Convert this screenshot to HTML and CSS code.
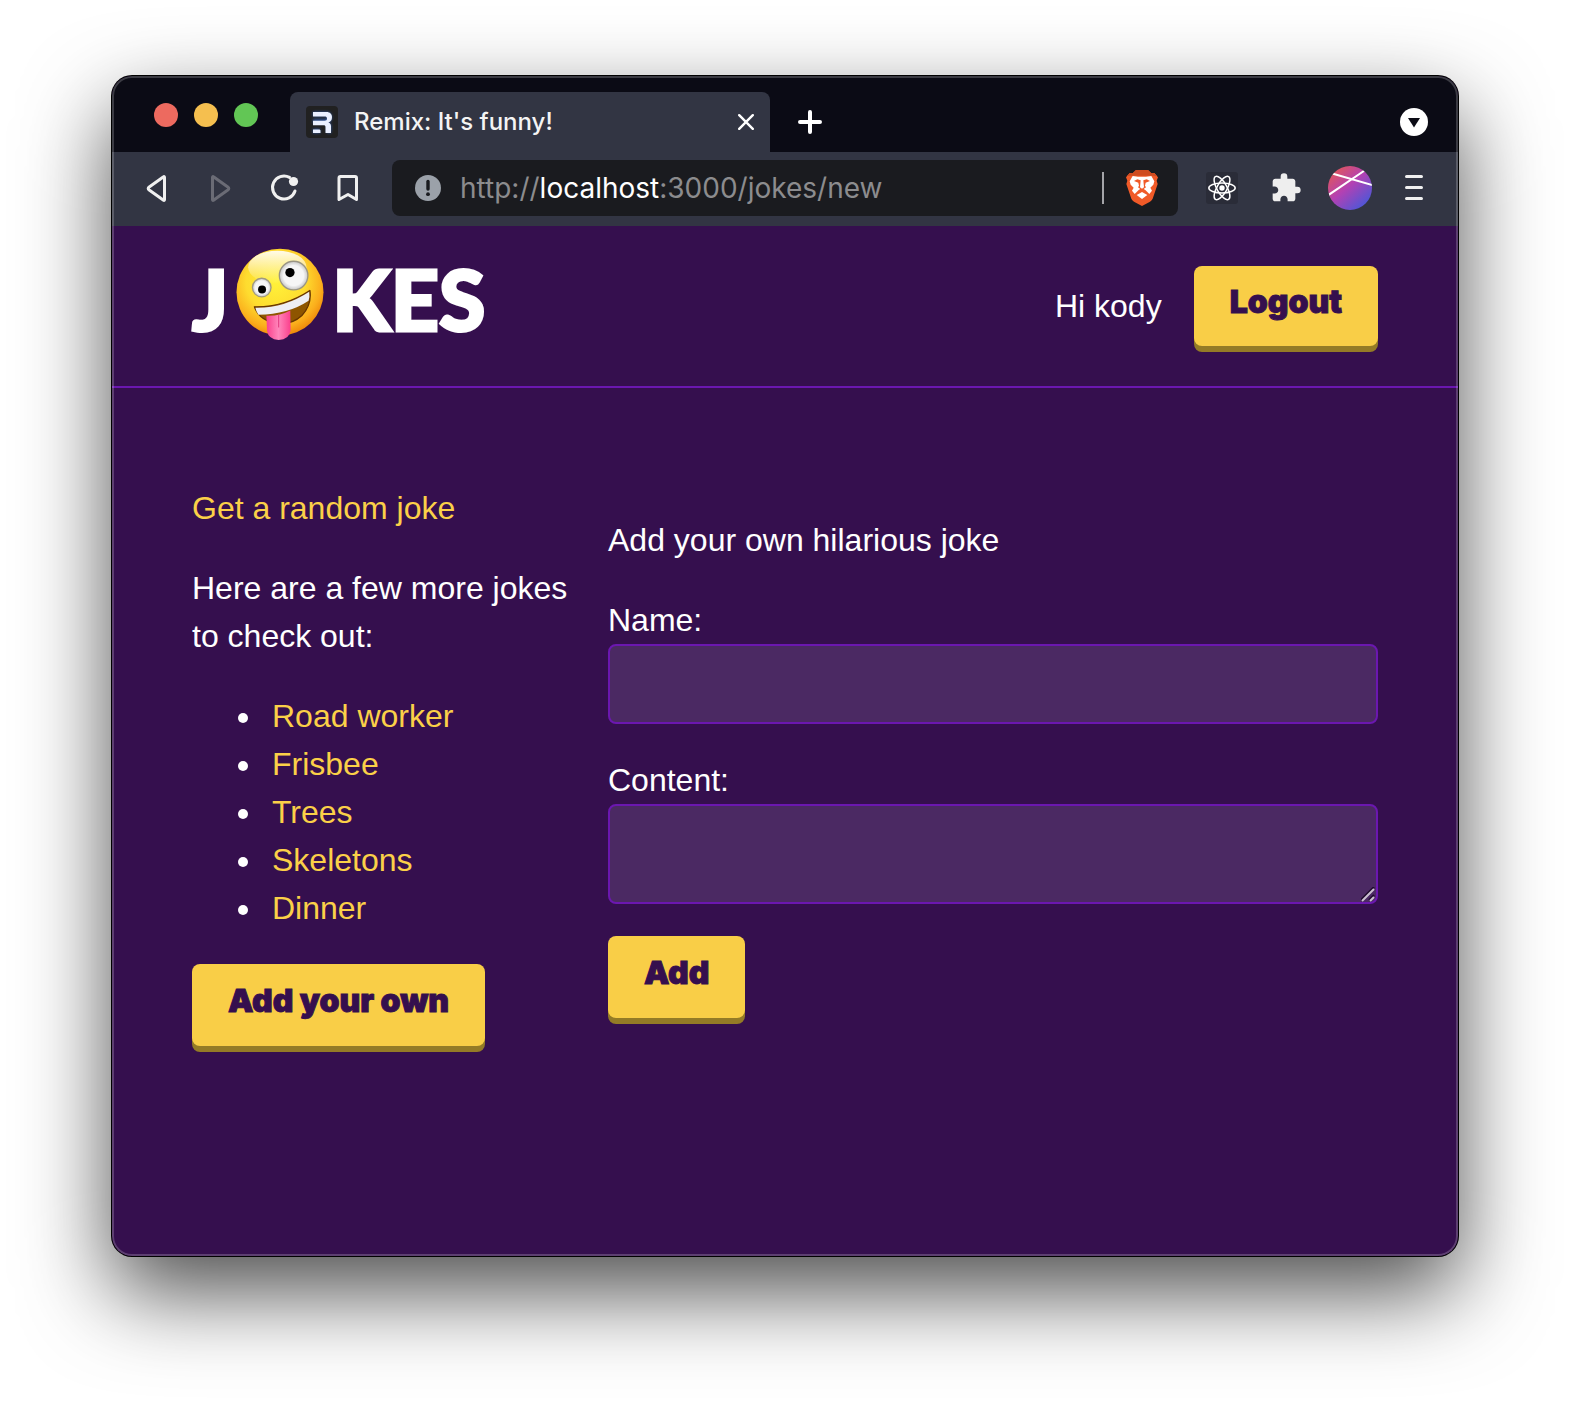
FILE: index.html
```
<!DOCTYPE html>
<html lang="en">
<head>
<meta charset="utf-8">
<meta name="viewport" content="width=device-width, initial-scale=1">
<title>Remix: It's funny!</title>
<link rel="stylesheet" href="styles.css">
</head>
<body>
<div class="window">
  <div class="tabstrip">
    <div class="lights"><span class="light red"></span><span class="light amber"></span><span class="light green"></span></div>
    <div class="tab">
      <svg class="favicon" viewBox="0 0 32 32" width="32" height="32" aria-hidden="true">
        <defs><filter id="glow" x="-50%" y="-50%" width="200%" height="200%"><feGaussianBlur stdDeviation="1.5"/></filter></defs>
        <rect width="32" height="32" rx="4" fill="#212121"/>
        <path d="M7 8H20Q23.500 8 23.500 11.500T20 15.200H7M7 25H14M23 18V27" fill="none" stroke="#3f83ff" stroke-width="4" filter="url(#glow)" opacity=".6"/>
        <path d="M7 6H20.500C24 6 26 8.200 26 11.200C26 14 24.600 15.800 22.300 16.400C24.300 17 25 18.300 25 20.500V27H19.500V21.500C19.500 19.700 19 19.300 17.500 19.300H7V14.700H18.500C20.300 14.700 21 14 21 12.500S20.300 10.400 18.500 10.400H7ZM7 23.500H13C14 23.500 14.500 24 14.500 25V27H7Z" fill="#eaf0ff"/>
      </svg>
      <span class="tab-title">Remix: It's funny!</span>
      <button class="plain tab-close" aria-label="Close tab"><svg viewBox="0 0 16 16" width="16" height="16"><path d="M1.200 1.200L14.800 14.800M14.800 1.200L1.200 14.800" stroke="#fff" stroke-width="2.400" stroke-linecap="round"/></svg></button>
    </div>
    <button class="plain new-tab" aria-label="New tab"><svg viewBox="0 0 24 24" width="24" height="24"><path d="M12 2V22M2 12H22" stroke="#fff" stroke-width="4" stroke-linecap="round"/></svg></button>
    <button class="plain tab-search" aria-label="Search tabs"><svg viewBox="0 0 28 28" width="28" height="28"><circle cx="14" cy="14" r="14" fill="#fff"/><path d="M8 10H20L14 19.500Z" fill="#0b0b15"/></svg></button>
  </div>

  <div class="toolbar">
    <div class="nav">
      <button class="plain" aria-label="Back"><svg viewBox="0 0 32 32" width="32" height="32"><path d="M24.500 5.500V27.500Q24.500 29 23.200 28L9.200 18Q7.200 16.500 9.200 15L23.200 5Q24.500 4 24.500 5.500Z" fill="none" stroke="#f0f0f0" stroke-width="3" stroke-linejoin="round"/></svg></button>
      <button class="plain" aria-label="Forward" disabled><svg viewBox="0 0 32 32" width="32" height="32"><path d="M8.500 5.500V27.500Q8.500 29 9.800 28L23.800 18Q25.800 16.500 23.800 15L9.800 5Q8.500 4 8.500 5.500Z" fill="none" stroke="#6a6b75" stroke-width="3" stroke-linejoin="round"/></svg></button>
      <button class="plain" aria-label="Reload"><svg viewBox="0 0 32 32" width="32" height="32"><path d="M21.500 5.400A11.500 11.500 0 1 0 27 19" fill="none" stroke="#f0f0f0" stroke-width="3" stroke-linecap="round"/><circle cx="25.500" cy="9.500" r="4.600" fill="#f0f0f0"/></svg></button>
      <button class="plain" aria-label="Bookmark"><svg viewBox="0 0 32 32" width="32" height="32"><path d="M8.500 4.500H23Q24.500 4.500 24.500 6V27.500L16 22.500L7 27.500V6Q7 4.500 8.500 4.500Z" fill="none" stroke="#f0f0f0" stroke-width="3" stroke-linejoin="round"/></svg></button>
    </div>
    <div class="address">
      <svg viewBox="0 0 26 26" width="26" height="26" aria-hidden="true"><circle cx="13" cy="13" r="13" fill="#9ba1a9"/><path d="M13 6.500V14" stroke="#1a1b1f" stroke-width="3.400" stroke-linecap="round"/><circle cx="13" cy="19.200" r="1.900" fill="#1a1b1f"/></svg>
      <span class="url">http://<b>localhost</b>:3000/jokes/new</span>
      <span class="divider"></span>
      <svg class="brave" viewBox="0 0 96 108" width="32" height="36" aria-hidden="true">
        <path d="M30 0H66L76 10L85 9L96 22L92 32L95 42L80 86Q78 91 72 95L48 108L24 95Q18 91 16 86L1 42L4 32L0 22L11 9L20 10Z" fill="#f05a28"/>
        <path d="M30 0H66L76 10L85 9L93 18L78 17H18L3 18L11 9L20 10Z" fill="#cf4c20"/>
        <path d="M20 18L36 20H60L76 18L85 34L82 44L73 53L78 62L70 72L58 60L53 57L60 52L57 47L59 38L72 33L62 28L52 31L54 52L48 56L42 52L44 31L34 28L24 33L37 38L39 47L36 52L43 57L38 60L26 72L18 62L23 53L14 44L11 34Z" fill="#fff"/>
        <path d="M48 66L64 75L48 87L32 75Z" fill="#fff"/>
      </svg>
    </div>
    <div class="extensions">
      <button class="plain" aria-label="React Developer Tools"><svg viewBox="0 0 32 32" width="32" height="32"><rect width="32" height="32" rx="3" fill="#2a2c38"/><g fill="none" stroke="#fff" stroke-width="1.500"><ellipse cx="16" cy="16" rx="13.200" ry="5"/><ellipse cx="16" cy="16" rx="13.200" ry="5" transform="rotate(60 16 16)"/><ellipse cx="16" cy="16" rx="13.200" ry="5" transform="rotate(120 16 16)"/></g><circle cx="16" cy="16" r="2.700" fill="#fff"/></svg></button>
      <button class="plain" aria-label="Extensions"><svg viewBox="0 0 24 24" width="32" height="32"><path d="M20.500 11H19V7c0-1.100-.9-2-2-2h-4V3.500a2.500 2.500 0 0 0-5 0V5H4c-1.100 0-1.990.9-1.990 2v3.800H3.500c1.490 0 2.700 1.210 2.700 2.700s-1.210 2.700-2.700 2.700H2V20c0 1.100.9 2 2 2h3.800v-1.500c0-1.490 1.210-2.700 2.700-2.700s2.700 1.210 2.700 2.700V22H17c1.100 0 2-.9 2-2v-4h1.500a2.500 2.500 0 0 0 0-5z" fill="#eee"/></svg></button>
      <button class="plain" aria-label="Profile"><svg viewBox="0 0 132 132" width="44" height="44"><defs><linearGradient id="av" x1=".15" y1=".1" x2=".85" y2=".9"><stop offset="0" stop-color="#de5560"/><stop offset=".45" stop-color="#b341b3"/><stop offset="1" stop-color="#4c57d8"/></linearGradient><clipPath id="avc"><circle cx="66" cy="66" r="66"/></clipPath></defs><g clip-path="url(#avc)"><rect width="132" height="132" fill="url(#av)"/><path d="M0 88L112 12M10 22L136 58" stroke="#fff" stroke-width="6"/></g></svg></button>
      <button class="plain" aria-label="Menu"><svg viewBox="0 0 32 32" width="32" height="32"><path d="M8.500 4.500H23.500M8.500 15.500H23.500M8.500 26.500H23.500" stroke="#f0f0f0" stroke-width="3" stroke-linecap="round"/></svg></button>
    </div>
  </div>

  <div class="page">
    <header class="header">
      <h1 class="logo"><a href="#" title="Remix Jokes" class="logo-link">
        <span>J</span>
        <svg class="zany" viewBox="168 34 264 280" width="88" height="93" role="img" aria-label="O">
          <defs>
            <radialGradient id="face" cx=".45" cy=".38" r=".62"><stop offset="0" stop-color="#fff23a"/><stop offset=".55" stop-color="#fedc2f"/><stop offset=".85" stop-color="#fbae1c"/><stop offset="1" stop-color="#f08c0c"/></radialGradient>
            <linearGradient id="shine" x1="0" y1="0" x2="0" y2="1"><stop offset="0" stop-color="#fff" stop-opacity=".9"/><stop offset="1" stop-color="#fff" stop-opacity="0"/></linearGradient>
            <radialGradient id="eye" cx=".5" cy=".5" r=".5"><stop offset=".7" stop-color="#f6f6f6"/><stop offset="1" stop-color="#c6c6c6"/></radialGradient>
            <linearGradient id="tongue" x1="0" y1="0" x2="1" y2="0"><stop offset="0" stop-color="#fb3f8c"/><stop offset=".5" stop-color="#ff86bb"/><stop offset="1" stop-color="#fb3f8c"/></linearGradient>
          </defs>
          <circle cx="300" cy="167" r="131" fill="url(#face)"/>
          <ellipse cx="292" cy="92" rx="88" ry="50" fill="url(#shine)"/>
          <circle cx="341" cy="117" r="43" fill="url(#eye)" stroke="#9a9584" stroke-width="4"/>
          <circle cx="330" cy="108" r="14" fill="#000"/>
          <circle cx="245" cy="153" r="28" fill="url(#eye)" stroke="#a09a80" stroke-width="4"/>
          <circle cx="246" cy="159" r="12" fill="#000"/>
          <path d="M223 211Q312 213 390 162Q396 205 366 237Q338 263 300 261Q240 258 223 211Z" fill="#8e5500" stroke="#663400" stroke-width="4" stroke-linejoin="round"/>
          <path d="M226 214Q312 216 388 166Q390 183 386 193Q325 234 235 235Q228 226 226 214Z" fill="#eeeef4"/>
          <path d="M259 238Q297 240 331 222L332 282Q328 311 296 311Q265 309 261 284Z" fill="url(#tongue)"/>
          <path d="M296 236V272" stroke="#e23a80" stroke-width="3" stroke-linecap="round"/>
        </svg>
        <span>KES</span>
      </a></h1>
      <div class="user"><span>Hi kody</span><form><button type="button" class="button button-compact">Logout</button></form></div>
    </header>
    <main class="main">
      <div class="list">
        <p><a href="#">Get a random joke</a></p>
        <p>Here are a few more jokes to check out:</p>
        <ul>
          <li><a href="#">Road worker</a></li>
          <li><a href="#">Frisbee</a></li>
          <li><a href="#">Trees</a></li>
          <li><a href="#">Skeletons</a></li>
          <li><a href="#">Dinner</a></li>
        </ul>
        <a href="#" class="button">Add your own</a>
      </div>
      <div class="outlet">
        <p>Add your own hilarious joke</p>
        <form class="joke-form">
          <div class="field"><label for="name">Name:</label><input id="name" type="text" name="name"></div>
          <div class="field"><label for="content">Content:</label><textarea id="content" name="content"></textarea></div>
          <button type="button" class="button">Add</button>
        </form>
      </div>
    </main>
  </div>
</div>
</body>
</html>
```
FILE: styles.css
```
* { box-sizing: border-box; }

body {
  margin: 0;
  min-height: 100vh;
  display: flex;
  padding: 76px 112px 148px;
  background: #fff;
  color: #fff;
  font: 32px/48px "Liberation Sans", Arial, sans-serif;
}

p, h1, ul { margin: 0; }
a { color: #fbd048; text-decoration: none; }
svg { display: block; flex: none; }

.plain {
  display: flex;
  align-items: center;
  justify-content: center;
  padding: 0;
  border: 0;
  background: none;
}

/* Browser window */
.window {
  position: relative;
  flex: 1;
  min-width: 0;
  display: flex;
  flex-direction: column;
  border-radius: 20px;
  overflow: hidden;
  background: #350f4e;
  box-shadow: 0 0 0 1px #000, 0 36px 88px rgba(0, 0, 0, .7);
}

.window::after {
  content: "";
  position: absolute;
  inset: 0;
  border-radius: 20px;
  box-shadow: inset 0 0 0 2px rgba(255, 255, 255, .2);
  pointer-events: none;
}

.tabstrip {
  display: flex;
  align-items: center;
  height: 76px;
  padding: 0 30px 0 42px;
  background: #0b0b15;
}

.lights { display: flex; gap: 16px; padding-top: 2px; }
.light { width: 24px; height: 24px; border-radius: 50%; }
.red { background: #ed6a5f; }
.amber { background: #f5bf4f; }
.green { background: #62c655; }

.tab {
  display: flex;
  align-items: center;
  align-self: flex-end;
  width: 480px;
  height: 60px;
  margin-left: 32px;
  padding: 0 16px;
  border-radius: 8px 8px 0 0;
  background: #323543;
}

.tab-title {
  flex: 1;
  margin-left: 16px;
  font: 500 24px/32px Inter, sans-serif;
  color: #f4f4f4;
}

.new-tab, .tab-search { align-self: flex-end; height: 60px; }
.new-tab { margin-left: 28px; }
.tab-search { margin-left: auto; }

.toolbar {
  display: flex;
  align-items: center;
  gap: 22px;
  padding: 8px 22px 10px 28px;
  background: #323543;
}

.nav { display: flex; gap: 32px; margin-right: 6px; }

.address {
  flex: 1;
  display: flex;
  align-items: center;
  height: 56px;
  padding: 0 20px 0 23px;
  border-radius: 8px;
  background: #1a1b1f;
}

.url {
  flex: 1;
  margin-left: 19px;
  font: 400 28px/40px Inter, sans-serif;
  color: #8c8c8e;
}

.url b { font-weight: 400; color: #fff; }
.divider { width: 2px; height: 32px; margin-right: 22px; background: #a4a4a8; }
.extensions { display: flex; align-items: center; gap: 20px; }
.extensions .plain { width: 44px; height: 44px; }

/* Jokes page */
.header {
  display: flex;
  align-items: center;
  justify-content: space-between;
  height: 162px;
  padding: 0 80px;
  border-bottom: 2px solid #6b17b0;
}

.logo {
  padding-bottom: 14px;
  font: 900 84px/96px Lato, sans-serif;
  -webkit-text-stroke: 3px #fff;
  stroke-linejoin: round;
}

.logo-link { display: flex; align-items: center; gap: 8px; color: #fff; }
.zany { margin-bottom: 10px; }
.user { display: flex; align-items: center; gap: 32px; }

.button {
  display: inline-block;
  padding: 16px 36px 24px;
  border: 0;
  border-radius: 8px;
  background: #f9ce47;
  box-shadow: 0 6px 0 #947b26;
  color: #350f4e;
  font: 900 32px/42px Inter, sans-serif;
  -webkit-text-stroke: 1px #350f4e;
  stroke-linejoin: round;
}

.button-compact { line-height: 40px; }

.main {
  display: flex;
  gap: 32px;
  padding: 96px 80px;
}

.list {
  flex: none;
  width: 384px;
  display: flex;
  flex-direction: column;
  align-items: flex-start;
  gap: 32px;
}

.list ul { padding-left: 72px; }
.list li { padding-left: 8px; }

.outlet { flex: 1; padding-top: 32px; }
.joke-form { display: flex; flex-direction: column; align-items: flex-start; gap: 32px; margin-top: 32px; }
.field { width: 100%; }
.field label { display: block; }

.field input, .field textarea {
  display: block;
  width: 100%;
  height: 80px;
  padding: 16px;
  border: 2px solid #6b17b0;
  border-radius: 8px;
  background: #4b2963;
  color: #fff;
  font: inherit;
}

.field textarea { height: 100px; resize: vertical; }

.field textarea::-webkit-resizer {
  background: url("data:image/svg+xml,%3Csvg xmlns='http://www.w3.org/2000/svg' width='15' height='15'%3E%3Cpath d='M0 13L13 0M8 13L13 8' stroke='%231e0a2c' stroke-width='2'/%3E%3Cpath d='M1 14L13 2M9 14L13 10' stroke='%23c9bfd0' stroke-width='2'/%3E%3C/svg%3E") no-repeat;
}
```
